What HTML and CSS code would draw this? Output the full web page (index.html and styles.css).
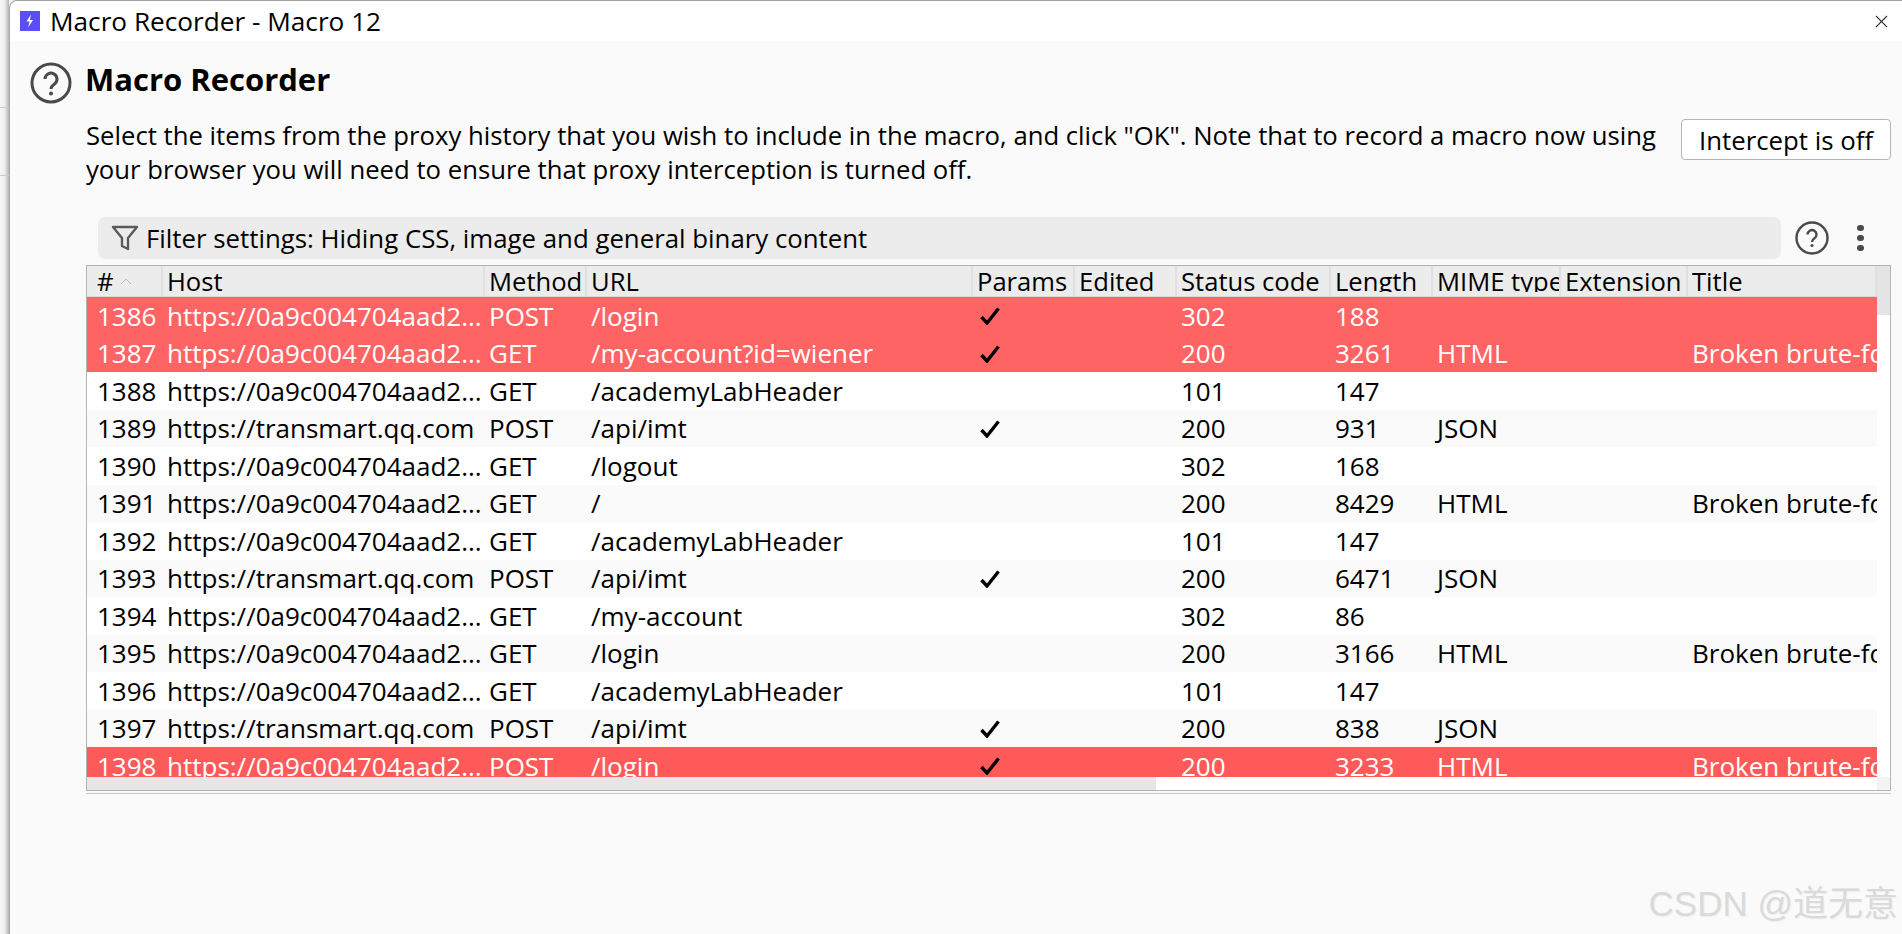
FILE: index.html
```html
<!DOCTYPE html>
<html lang="en">

<head>
    <meta charset="UTF-8">
    <title>Macro Recorder - Macro 12</title>
    <link rel="stylesheet" href="styles.css">
</head>

<body>
    <div class="backdrop">
        <div class="backdrop-line"></div>
        <div class="backdrop-line"></div>
    </div>
    <div class="window">
        <div class="titlebar">
            <svg class="app-icon" viewBox="0 0 20 20">
                <rect width="20" height="20" fill="#5a4ff5"/>
                <path d="M11 3.5 6.5 10.5h3.2L8 16.5l5-7.5H9.8z" fill="#fff"/>
            </svg>
            <span class="window-title">Macro Recorder - Macro 12</span>
            <svg class="close-icon" viewBox="0 0 14 14">
                <path d="M1 1 13 13M13 1 1 13" stroke="#222" stroke-width="1.2" fill="none"/>
            </svg>
        </div>
        <div class="content">
            <div class="heading">
                <svg class="help-big" viewBox="0 0 42 42">
                    <circle cx="21" cy="21" r="19" fill="none" stroke="#4a4a4a" stroke-width="3"/>
                    <path d="M15 17a6 6 0 1 1 9.5 5c-2.2 1.5-3.5 2.4-3.5 5" fill="none" stroke="#4a4a4a" stroke-width="3"/>
                    <circle cx="21" cy="31.5" r="2" fill="#4a4a4a"/>
                </svg>
                <h1>Macro Recorder</h1>
            </div>
            <div class="intro">
                <p>Select the items from the proxy history that you wish to include in the macro, and click "OK". Note that to record a macro now using your browser you will need to ensure that proxy interception is turned off.</p>
                <button class="intercept">Intercept is off</button>
            </div>
            <div class="filter-row">
                <div class="filter">
                    <svg class="funnel" viewBox="0 0 28 26">
                        <path d="M2 2h24L17 13v11l-6-3v-8z" fill="none" stroke="#5a5a5a" stroke-width="2.4" stroke-linejoin="round"/>
                    </svg>
                    <span>Filter settings: Hiding CSS, image and general binary content</span>
                </div>
                <svg class="help-small" viewBox="0 0 34 34">
                    <circle cx="17" cy="17" r="15.5" fill="none" stroke="#4a4a4a" stroke-width="2.4"/>
                    <path d="M12.5 13.5a4.5 4.5 0 1 1 7 3.8c-1.6 1.1-2.5 1.8-2.5 3.7" fill="none" stroke="#4a4a4a" stroke-width="2.4"/>
                    <circle cx="17" cy="24.5" r="1.6" fill="#4a4a4a"/>
                </svg>
                <div class="kebab"><i></i><i></i><i></i></div>
            </div>
            <div class="table-wrap">
                <div class="table-main">
                    <div class="row head">
                        <div class="cell c-num"><span>#</span><svg class="sort" viewBox="0 0 12 7"><path d="M1 6l5-5 5 5" fill="none" stroke="#bbb" stroke-width="1"/></svg></div>
                        <div class="cell c-host"><span>Host</span></div>
                        <div class="cell c-method"><span>Method</span></div>
                        <div class="cell c-url"><span>URL</span></div>
                        <div class="cell c-params"><span>Params</span></div>
                        <div class="cell c-edited"><span>Edited</span></div>
                        <div class="cell c-status"><span>Status code</span></div>
                        <div class="cell c-length"><span>Length</span></div>
                        <div class="cell c-mime"><span>MIME type</span></div>
                        <div class="cell c-ext"><span>Extension</span></div>
                        <div class="cell c-title"><span>Title</span></div>
                    </div>
                    <div class="rows" id="rows"></div>
                    <div class="hscroll"><div class="hthumb"></div></div>
                </div>
                <div class="vscroll">
                    <div class="vthumb"></div>
                    <div class="corner"></div>
                </div>
            </div>
            <div class="table-under"></div>
        </div>
    </div>
    <div class="watermark">CSDN @道无意</div>

    <script>
        const LONG = 'https://0a9c004704aad2...'
        const QQ = 'https://transmart.qq.com'
        const TITLE = 'Broken brute-force protection, IP block'
        // num, host, method, url, params, status, length, mime, title, row color
        const data = [
            [1386, LONG, 'POST', '/login', 1, 302, 188, '', '', 'red'],
            [1387, LONG, 'GET', '/my-account?id=wiener', 1, 200, 3261, 'HTML', TITLE, 'red'],
            [1388, LONG, 'GET', '/academyLabHeader', 0, 101, 147, '', '', ''],
            [1389, QQ, 'POST', '/api/imt', 1, 200, 931, 'JSON', '', ''],
            [1390, LONG, 'GET', '/logout', 0, 302, 168, '', '', ''],
            [1391, LONG, 'GET', '/', 0, 200, 8429, 'HTML', TITLE, ''],
            [1392, LONG, 'GET', '/academyLabHeader', 0, 101, 147, '', '', ''],
            [1393, QQ, 'POST', '/api/imt', 1, 200, 6471, 'JSON', '', ''],
            [1394, LONG, 'GET', '/my-account', 0, 302, 86, '', '', ''],
            [1395, LONG, 'GET', '/login', 0, 200, 3166, 'HTML', TITLE, ''],
            [1396, LONG, 'GET', '/academyLabHeader', 0, 101, 147, '', '', ''],
            [1397, QQ, 'POST', '/api/imt', 1, 200, 838, 'JSON', '', ''],
            [1398, LONG, 'POST', '/login', 1, 200, 3233, 'HTML', TITLE, 'red2']
        ]
        const check = '<svg class="check" viewBox="0 0 20 18"><path d="M1.5 10l5.5 6L18.5 1.5" fill="none" stroke="#000" stroke-width="3.4"/></svg>'

        document.getElementById('rows').innerHTML = data.map(d => `
            <div class="row ${d[9]}">
                <div class="cell c-num">${d[0]}</div>
                <div class="cell c-host">${d[1]}</div>
                <div class="cell c-method">${d[2]}</div>
                <div class="cell c-url">${d[3]}</div>
                <div class="cell c-params">${d[4] ? check : ''}</div>
                <div class="cell c-edited"></div>
                <div class="cell c-status">${d[5]}</div>
                <div class="cell c-length">${d[6]}</div>
                <div class="cell c-mime">${d[7]}</div>
                <div class="cell c-ext"></div>
                <div class="cell c-title">${d[8]}</div>
            </div>`).join('')
    </script>
</body>

</html>
```
FILE: styles.css
```css
* {
    box-sizing: border-box;
}

html,
body {
    margin: 0;
    height: 100%;
    overflow: hidden;
}

body {
    display: flex;
    background: #f4f4f4;
    font-family: "Open Sans", "Noto Sans", sans-serif;
    color: #000;
}

.backdrop {
    width: 9px;
    padding-top: 107px;
    background: linear-gradient(to right, #f7f7f7, #eeeeee 50%, #b5b5b5);
}

.backdrop-line {
    height: 1px;
    margin-bottom: 67px;
    background: #ccc;
}

.window {
    flex: 1;
    display: flex;
    flex-direction: column;
    border-top: 1px solid #a0a0a0;
    border-left: 1px solid #a8a8a8;
    border-top-left-radius: 8px;
    background: #fff;
}

.titlebar {
    height: 40px;
    display: flex;
    align-items: center;
    padding: 0 14px 0 10px;
    background: transparent;
}

.app-icon {
    width: 20px;
    height: 20px;
}

.window-title {
    margin-left: 10px;
    font-size: 26.2px;
}

.close-icon {
    width: 13px;
    height: 13px;
    margin-left: auto;
}

.content {
    flex: 1;
    padding: 21px 11px 0 20px;
    background: #fafafa;
}

.heading {
    display: flex;
    align-items: center;
    gap: 13px;
    height: 42px;
}

.help-big {
    width: 42px;
    height: 42px;
}

h1 {
    margin: -9px 0 0;
    font-size: 31px;
    font-weight: 700;
}

.intro {
    display: flex;
    justify-content: space-between;
    margin: 15px 0 0 56px;
}

.intro p {
    width: 1585px;
    margin: 0;
    font-size: 25.7px;
    line-height: 34px;
}

.intercept {
    width: 210px;
    height: 41px;
    padding: 0;
    border: 1px solid #b8b4b4;
    border-radius: 4px;
    background: #fff;
    font: inherit;
    font-size: 25.8px;
    color: #000;
}

.filter-row {
    display: flex;
    align-items: center;
    height: 42px;
    margin: 30px 0 0 68px;
}

.filter {
    width: 1683px;
    height: 42px;
    display: flex;
    align-items: center;
    gap: 7px;
    padding-left: 13px;
    border-radius: 7px;
    background: #ececec;
    font-size: 25.8px;
}

.funnel {
    width: 28px;
    height: 26px;
}

.help-small {
    width: 34px;
    height: 34px;
    margin-left: 14px;
}

.kebab {
    display: flex;
    flex-direction: column;
    gap: 3.5px;
    margin-left: 28px;
}

.kebab i {
    width: 6.5px;
    height: 6.5px;
    border-radius: 50%;
    background: #4a4a4a;
}

.table-wrap {
    display: flex;
    width: 1805px;
    height: 526px;
    margin: 6px 0 0 56px;
    border: 1px solid #b4b4b4;
}

.table-main {
    width: 1790px;
}

.row {
    display: flex;
    height: 37.5px;
    background: #fff;
    font-size: 26px;
}

.row:nth-child(even) {
    background: #fafafa;
}

.row.red {
    background: #ff6464;
    color: #fff;
}

.row.red2 {
    background: #ff5a5a;
    color: #fff;
}

.row.head {
    height: 31px;
    background: #ececec;
    border-bottom: 1px solid #d8d8d8;
    font-size: 25.6px;
}

.rows {
    height: 480px;
    overflow: hidden;
}

.cell {
    flex-shrink: 0;
    display: flex;
    align-items: center;
    padding-top: 1px;
    padding-left: 4px;
    white-space: nowrap;
    overflow: hidden;
    line-height: 37px;
}

.head .cell {
    align-items: flex-start;
    padding-top: 0;
    border-right: 2px solid #e0e0e0;
}

/* header labels get their descenders cut off */
.head .cell span {
    height: 26px;
    overflow: hidden;
    line-height: 32px;
}

.c-num {
    width: 76px;
    padding-left: 10px;
}

.c-host {
    width: 322px;
}

.c-method {
    width: 102px;
}

.c-url {
    width: 386px;
}

.c-params {
    width: 102px;
}

.c-edited {
    width: 102px;
}

.c-status {
    width: 154px;
}

.c-length {
    width: 102px;
}

.c-mime {
    width: 128px;
}

.c-ext {
    width: 127px;
}

.c-title {
    width: 189px;
}

.sort {
    width: 12px;
    height: 7px;
    margin: 12px 0 0 6px;
}

.check {
    width: 20px;
    height: 18px;
    margin-left: 3px;
}

.hscroll {
    height: 13px;
    background: #fff;
}

.hthumb {
    width: 1069px;
    height: 13px;
    background: #e6e6e6;
}

.vscroll {
    width: 13px;
    display: flex;
    flex-direction: column;
    justify-content: space-between;
    background: #fff;
}

.vthumb {
    height: 49px;
    background: #e4e4e4;
}

.corner {
    height: 13px;
    background: #f4f4f4;
}

.table-under {
    width: 1805px;
    height: 1px;
    margin: 2px 0 0 56px;
    background: #c8c8c8;
}

.watermark {
    position: absolute;
    right: 4px;
    bottom: 8px;
    font-family: "Liberation Sans", "Noto Sans CJK SC", sans-serif;
    font-size: 35px;
    color: #dadada;
    text-shadow: 1px 1px 1px #eee;
}
```
